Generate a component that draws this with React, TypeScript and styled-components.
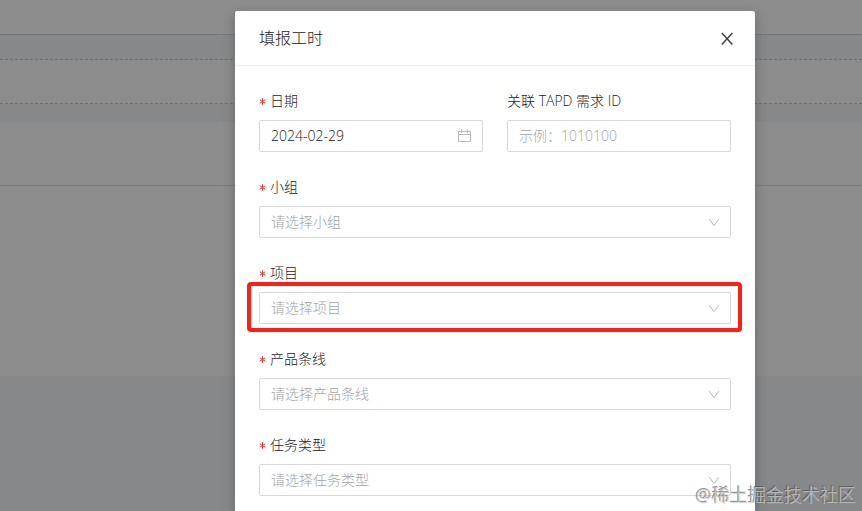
import React from "react";
import styled, { createGlobalStyle, css } from "styled-components";

const GlobalStyle = createGlobalStyle`
  *, *::before, *::after { box-sizing: border-box; }
  body {
    margin: 0;
    overflow: hidden;
    font-family: "Open Sans", "Noto Sans CJK SC", sans-serif;
    font-weight: 300;
    font-size: 14px;
    line-height: 22px;
    color: #1c1c1c;
  }
  button, input, select { font: inherit; }
`;

const Screen = styled.div`
  position: relative;
  height: 100vh;
  overflow: hidden;
`;

const Backdrop = styled.div`
  height: 100%;
  display: flex;
  flex-direction: column;
  background: #f5f7f9;
`;

const TopBar = styled.div`
  height: 35px;
  background: #fff;
  border-bottom: 1px solid #d8dadd;
`;

const DashedRow = styled.div`
  height: 45px;
  margin: 24px 0 18px;
  background: #fff;
  border-top: 1px dashed #c6c6c6;
  border-bottom: 1px dashed #c6c6c6;
`;

const PanelHead = styled.div`
  height: 64px;
  background: #fff;
  border-bottom: 1px solid #e4e4e4;
`;

const PanelBody = styled.div`
  height: 190px;
  background: #fff;
`;

const Mask = styled.div`
  position: absolute;
  inset: 0;
  display: flex;
  justify-content: center;
  padding: 11px 16px 0 144px;
  background: rgba(0, 0, 0, 0.45);
`;

const Dialog = styled.section`
  width: 100%;
  max-width: 520px;
  background: #fff;
  border-radius: 2px 2px 0 0;
  box-shadow: 0 4px 12px rgba(0, 0, 0, 0.25);
`;

const Header = styled.header`
  display: flex;
  align-items: center;
  justify-content: space-between;
  height: 55px;
  padding: 0 20px 0 24px;
  border-bottom: 1px solid #f0f0f0;
`;

const Title = styled.h1`
  margin: 0;
  font-size: 16px;
  line-height: 22px;
  font-weight: 300;
`;

const IconButton = styled.button`
  display: flex;
  align-items: center;
  justify-content: center;
  flex: none;
  padding: 0;
  border: 0;
  background: none;
  color: inherit;
  cursor: pointer;
`;

const CloseButton = styled(IconButton)`
  width: 16px;
  height: 16px;
  color: #444;
`;

const Form = styled.form`
  display: flex;
  flex-direction: column;
  gap: 24px;
  padding: 24px;
`;

const Row = styled.div`
  display: grid;
  grid-template-columns: 1fr 1fr;
  gap: 24px;
`;

const Field = styled.div`
  display: flex;
  flex-direction: column;
  gap: 8px;
`;

const Label = styled.label`
  display: flex;
  align-items: center;
  height: 22px;
`;

const Star = styled.svg`
  width: 7px;
  height: 7px;
  margin-right: 4px;
  flex: none;
  stroke: #e0393c;
  fill: none;
`;

const Control = styled.div<{ $marked?: boolean }>`
  position: relative;
  display: flex;
  align-items: center;
  height: 32px;
  padding: 0 10px 0 11px;
  border: 1px solid #d9d9d9;
  border-radius: 2px;
  color: #bfbfbf;

  ${(p) =>
    p.$marked &&
    css`
      &::after {
        content: "";
        position: absolute;
        inset: -11px -12px -9px -13px;
        border: 4px solid #fb2015;
        border-radius: 4px;
        pointer-events: none;
      }
    `}
`;

const TextInput = styled.input`
  flex: 1;
  min-width: 0;
  height: 22px;
  padding: 0;
  border: 0;
  outline: 0;
  background: none;
  color: #1c1c1c;
  font-weight: 300;

  &::placeholder {
    color: #a4a4a4;
    opacity: 1;
  }
`;

const Select = styled.select`
  flex: 1;
  min-width: 0;
  height: 22px;
  padding: 0;
  border: 0;
  outline: 0;
  appearance: none;
  background: none;
  color: #a4a4a4;
  font-weight: 300;
`;

const Chevron = styled.svg`
  width: 12px;
  height: 12px;
  flex: none;
  fill: none;
  stroke: #b8b8b8;
  pointer-events: none;
`;

const Watermark = styled.div`
  position: absolute;
  right: 6px;
  bottom: 4px;
  font-size: 18px;
  line-height: 24px;
  font-weight: 400;
  color: rgba(200, 200, 200, 0.75);
  text-shadow: -1px -1px 0 rgba(70, 70, 70, 0.6);
  pointer-events: none;
`;

const RequiredStar = () => (
  <Star viewBox="0 0 7 7" aria-hidden="true">
    <path d="M3.5 .3v6.4M.8 1.8l5.4 3.4M6.2 1.8L.8 5.2" />
  </Star>
);

type SelectFieldProps = { id: string; label: string; marked?: boolean };

const SelectField = ({ id, label, marked }: SelectFieldProps) => (
  <Field>
    <Label htmlFor={id}>
      <RequiredStar />
      {label}
    </Label>
    <Control $marked={marked}>
      <Select id={id} required defaultValue="">
        <option value="">请选择{label}</option>
      </Select>
      <Chevron viewBox="0 0 12 12" aria-hidden="true">
        <path d="M1.3 3.3L6 9.6l4.7-6.3" />
      </Chevron>
    </Control>
  </Field>
);

export default function App() {
  return (
    <>
      <GlobalStyle />
      <Screen>
        <Backdrop>
          <TopBar />
          <DashedRow />
          <PanelHead />
          <PanelBody />
        </Backdrop>
        <Mask>
          <Dialog role="dialog" aria-modal="true" aria-labelledby="dialog-title">
            <Header>
              <Title id="dialog-title">填报工时</Title>
              <CloseButton type="button" aria-label="关闭">
                <svg width="16" height="16" viewBox="0 0 16 16" fill="none" stroke="currentColor" strokeWidth="1.5">
                  <path d="M2.8 3l10.6 11.6M13.4 3L2.8 14.6" />
                </svg>
              </CloseButton>
            </Header>
            <Form>
              <Row>
                <Field>
                  <Label htmlFor="date">
                    <RequiredStar />
                    日期
                  </Label>
                  <Control>
                    <TextInput id="date" type="text" required defaultValue="2024-02-29" />
                    <IconButton type="button" aria-label="选择日期">
                      <svg width="14" height="14" viewBox="0 0 14 14" fill="none" stroke="#b8b8b8">
                        <path d="M.5 2.5h12v10H.5zM.5 5.5h12M3.5 .5v3.5M9.5 .5v3.5" />
                      </svg>
                    </IconButton>
                  </Control>
                </Field>
                <Field>
                  <Label htmlFor="story">关联 TAPD 需求 ID</Label>
                  <Control>
                    <TextInput id="story" type="text" placeholder="示例：1010100" />
                  </Control>
                </Field>
              </Row>
              <SelectField id="group" label="小组" />
              <SelectField id="project" label="项目" marked />
              <SelectField id="product" label="产品条线" />
              <SelectField id="task" label="任务类型" />
            </Form>
          </Dialog>
        </Mask>
        <Watermark>@稀土掘金技术社区</Watermark>
      </Screen>
    </>
  );
}
